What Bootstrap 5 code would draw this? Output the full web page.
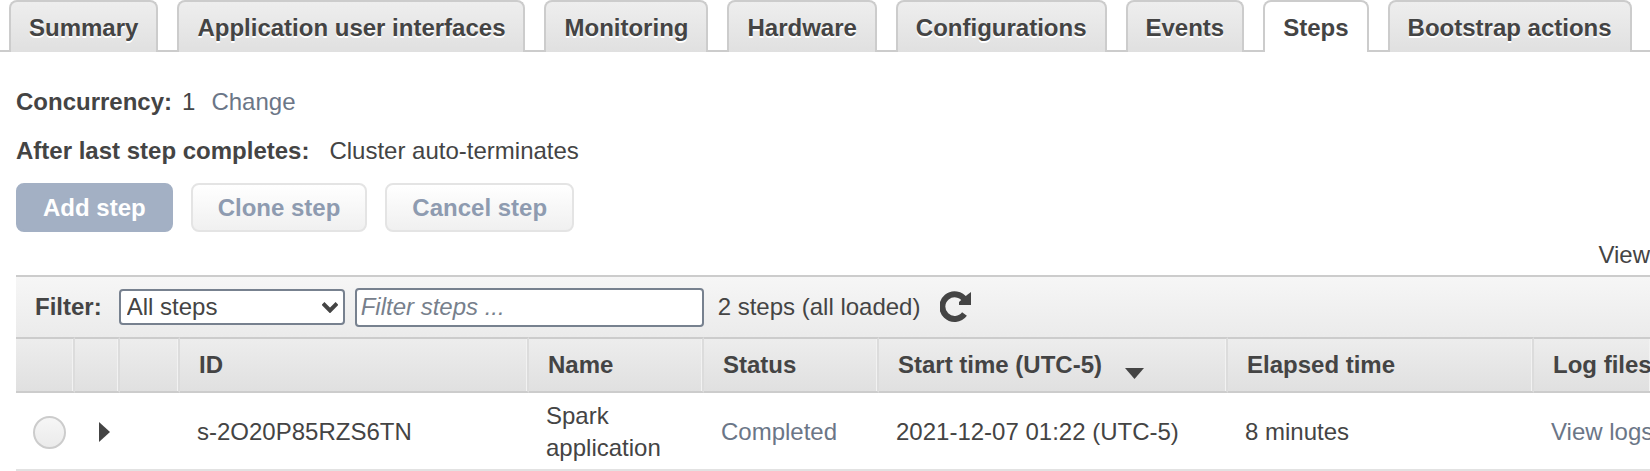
<!DOCTYPE html>
<html lang="en">
<head>
<meta charset="utf-8">
<meta name="viewport" content="width=device-width, initial-scale=1">
<title>Cluster steps</title>
<link href="https://cdn.jsdelivr.net/npm/bootstrap@5.3.0/dist/css/bootstrap.min.css" rel="stylesheet">
<style>
  body { font-family: "Liberation Sans", Arial, sans-serif; font-size: 24px; line-height: 32px; color: #444; overflow-x: hidden; }
  a { color: #6b7687; text-decoration: none; }
  .step-tabs { gap: 19px; padding-left: 9px; border-bottom: 2px solid #ccc; }
  .step-tabs .nav-link { padding: 10px 18px 8px; margin-bottom: -2px; border: 2px solid #ccc; border-bottom: 0; border-radius: 8px 8px 0 0; background: linear-gradient(#eee, #e0e0e0); color: #444; font-weight: bold; text-shadow: 0 2px 0 #fff; }
  .step-tabs .nav-link.active { background: #fff; border-color: #ccc; color: #444; }
  .step-panel { padding: 34px 0 0 16px; }
  .step-line { margin-bottom: 17px; }
  .step-line + .step-line { margin-bottom: 16px; }
  .step-line strong { margin-right: 10px; }
  .step-line + .step-line strong { margin-right: 20px; }
  .step-actions { gap: 18px; }
  .step-btn { height: 49px; padding: 0 25px; border: 2px solid #e4e4e4; border-radius: 8px; background: linear-gradient(#fff, #f0f0f0); color: #8e9bb0; font-size: 24px; font-weight: bold; line-height: 32px; }
  .step-btn-main { background: #a3b0c4; border-color: #a3b0c4; color: #fff; }
  .view-line { padding: 7px 0 4px; }
  .filter-bar { height: 62px; padding: 0 19px; border-top: 2px solid #ccc; background: linear-gradient(#f6f6f6, #ebebeb); }
  .filter-bar select, .filter-bar input { border: 2px solid #77818f; border-radius: 4px; font-size: 24px; line-height: 32px; color: #444; background-color: #fff; }
  .filter-pick { width: 226px; margin-left: 17px; }
  .filter-pick select { height: 36px; padding: 0 36px 0 6px; appearance: none; width: 100%; line-height: 30px; }
  .filter-pick svg { right: 7px; top: 13px; pointer-events: none; }
  .filter-bar input { width: 349px; height: 39px; padding: 0 4px; margin-left: 10px; }
  .filter-bar input::placeholder { color: #77808c; font-style: italic; opacity: 1; }
  .filter-count { margin: 0 20px 0 14px; }
  .step-table { table-layout: fixed; width: 100%; min-width: 1634px; margin: 0; border-collapse: separate; border-spacing: 0; }
  .step-table th { height: 56px; padding: 0 0 0 19px; border-top: 2px solid #ccc; border-bottom: 2px solid #ccc; border-right: 2px solid #dcdcdc; box-shadow: inset -1px 0 0 #f2f2f2; background: linear-gradient(#ededed, #e0e0e0); white-space: nowrap; }
  .step-table th:last-child { border-right: 0; }
  .step-table td { height: 78px; padding: 7px 18px 5px 17px; border-bottom: 2px solid #e2e2e2; vertical-align: middle; }
  .sort-mark { margin-left: 16px; vertical-align: -6px; }
  .pick { appearance: none; display: block; width: 33px; height: 33px; margin: 0; border: 2px solid #ccc; border-radius: 50%; background: linear-gradient(#f6f6f6, #ebebeb); }
  .c-pick { width: 59px; } .c-open { width: 45px; } .c-gap { width: 60px; } .c-id { width: 349px; }
  .c-name { width: 175px; } .c-status { width: 175px; } .c-start { width: 349px; } .c-time { width: 306px; }
</style>
<script src="https://cdn.jsdelivr.net/npm/bootstrap@5.3.0/dist/js/bootstrap.bundle.min.js"></script>
</head>
<body>
<ul class="nav step-tabs flex-nowrap text-nowrap">
  <li class="nav-item"><a class="nav-link" href="#">Summary</a></li>
  <li class="nav-item"><a class="nav-link" href="#">Application user interfaces</a></li>
  <li class="nav-item"><a class="nav-link" href="#">Monitoring</a></li>
  <li class="nav-item"><a class="nav-link" href="#">Hardware</a></li>
  <li class="nav-item"><a class="nav-link" href="#">Configurations</a></li>
  <li class="nav-item"><a class="nav-link" href="#">Events</a></li>
  <li class="nav-item"><a class="nav-link active" aria-current="page" href="#">Steps</a></li>
  <li class="nav-item"><a class="nav-link" href="#">Bootstrap actions</a></li>
</ul>
<main class="step-panel">
  <div class="step-line d-flex"><strong>Concurrency:</strong><span class="me-3">1</span><a href="#">Change</a></div>
  <div class="step-line d-flex"><strong>After last step completes:</strong><span>Cluster auto-terminates</span></div>
  <div class="step-actions d-flex">
    <button type="button" class="step-btn step-btn-main">Add step</button>
    <button type="button" class="step-btn">Clone step</button>
    <button type="button" class="step-btn">Cancel step</button>
  </div>
  <div class="view-line d-flex justify-content-end overflow-hidden">View</div>
  <div class="filter-bar d-flex align-items-center text-nowrap">
    <label class="fw-bold" for="state">Filter:</label>
    <div class="filter-pick position-relative">
      <select id="state" class="d-block"><option>All steps</option></select>
      <svg class="position-absolute" width="16" height="11" viewBox="0 0 16 11" fill="none" stroke="#444" stroke-width="4"><path d="M1 1.5 8 8.5 15 1.5"/></svg>
    </div>
    <input type="text" aria-label="Filter steps" placeholder="Filter steps ...">
    <span class="filter-count">2 steps (all loaded)</span>
    <button type="button" class="btn p-0 border-0 d-flex" aria-label="Refresh">
      <svg width="32" height="32" viewBox="0 0 32 32"><path d="M24.500 23A12.300 12.300 0 1 1 25 9" fill="none" stroke="#444" stroke-width="6"/><path d="M31 1V14H19V11L27 4Z" fill="#444"/></svg>
    </button>
  </div>
  <table class="step-table">
    <colgroup><col class="c-pick"><col class="c-open"><col class="c-gap"><col class="c-id"><col class="c-name"><col class="c-status"><col class="c-start"><col class="c-time"><col></colgroup>
    <thead>
      <tr><th></th><th></th><th></th><th>ID</th><th>Name</th><th>Status</th>
        <th>Start time (UTC-5) <svg class="sort-mark" width="19" height="11" viewBox="0 0 19 11"><path d="M0 0H19L9.5 11Z" fill="#444"/></svg></th>
        <th>Elapsed time</th><th>Log files</th></tr>
    </thead>
    <tbody>
      <tr>
        <td><input class="pick" type="radio" name="step" aria-label="Select step s-2O20P85RZS6TN"></td>
        <td class="ps-4 pe-0"><button type="button" class="btn p-0 border-0 d-flex" aria-label="Expand"><svg width="11" height="20" viewBox="0 0 11 20"><path d="M0 0V20L11 10Z" fill="#444"/></svg></button></td>
        <td></td>
        <td>s-2O20P85RZS6TN</td>
        <td>Spark application</td>
        <td><a href="#">Completed</a></td>
        <td class="text-nowrap">2021-12-07 01:22 (UTC-5)</td>
        <td>8 minutes</td>
        <td class="text-nowrap"><a href="#">View logs</a></td>
      </tr>
    </tbody>
  </table>
</main>
</body>
</html>
